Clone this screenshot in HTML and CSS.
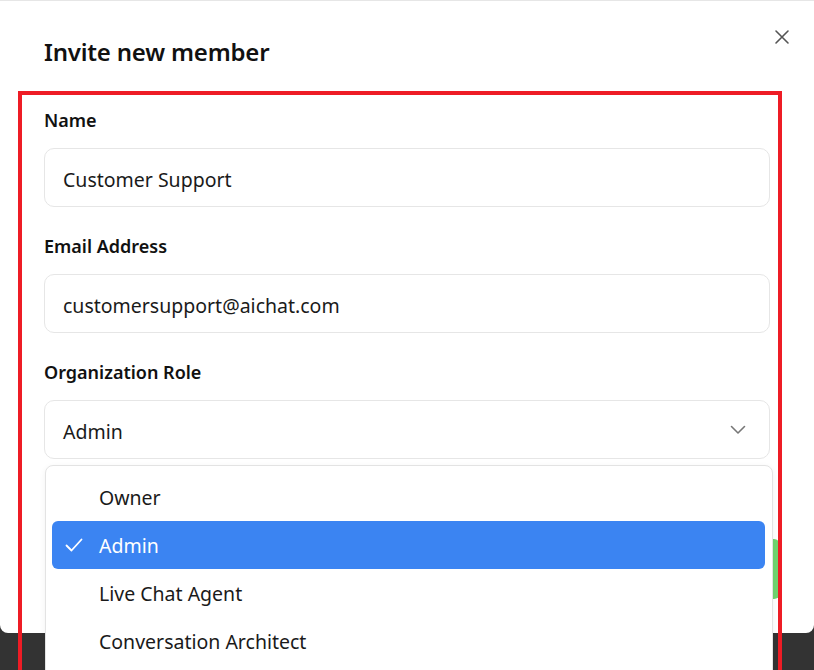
FILE: index.html
```html
<!DOCTYPE html>
<html>
<head>
<meta charset="utf-8">
<link rel="stylesheet" href="styles.css">
</head>
<body>
<div class="modal">
  <button class="close" aria-label="Close">
    <svg width="16" height="16" viewBox="0 0 16 16"><path d="M2 2L14 14M14 2L2 14" stroke="#555" stroke-width="1.6" stroke-linecap="round"/></svg>
  </button>
  <h1 class="title">Invite new member</h1>
  <div class="form">
    <div class="field">
      <label class="label">Name</label>
      <div class="input">Customer Support</div>
    </div>
    <div class="field">
      <label class="label">Email Address</label>
      <div class="input">customersupport@aichat.com</div>
    </div>
    <div class="field role">
      <label class="label">Organization Role</label>
      <div class="input select">
        <span>Admin</span>
        <svg width="16" height="10" viewBox="0 0 16 10"><path d="M1.5 1.5L8 8L14.5 1.5" fill="none" stroke="#777" stroke-width="1.6" stroke-linecap="round" stroke-linejoin="round"/></svg>
      </div>
      <div class="footer"><div class="btn-green"></div></div>
      <ul class="menu">
        <li class="item">Owner</li>
        <li class="item active">
          <svg class="check" width="18" height="14" viewBox="0 0 18 14"><path d="M1.5 7.5L6.5 12.5L16.5 1.5" fill="none" stroke="#fff" stroke-width="1.8" stroke-linecap="round" stroke-linejoin="round"/></svg>
          Admin</li>
        <li class="item">Live Chat Agent</li>
        <li class="item">Conversation Architect</li>
      </ul>
    </div>
  </div>
  <div class="highlight"></div>
</div>
</body>
</html>
```
FILE: styles.css
```css
html, body {
  margin: 0;
  padding: 0;
}
body {
  background: #333333;
  font-family: "Noto Sans", "Open Sans", sans-serif;
  color: #1a1a1a;
  width: 814px;
  height: 670px;
  overflow: hidden;
}
.modal {
  position: relative;
  box-sizing: border-box;
  height: 633px;
  background: #fff;
  border-top: 1px solid #e6e6e6;
  border-radius: 0 0 8px 8px;
  padding: 34px 44px 0 44px;
}
.close {
  position: absolute;
  top: 28px;
  right: 24px;
  border: 0;
  background: none;
  padding: 0;
  width: 16px;
  height: 16px;
}
.close svg { display: block; }
.title {
  margin: 0;
  font-size: 24px;
  line-height: 34px;
  font-weight: 600;
  letter-spacing: -0.2px;
  color: #111;
}
.form {
  margin-top: 39px;
  display: flex;
  flex-direction: column;
  gap: 27px;
}
.field {
  display: flex;
  flex-direction: column;
  gap: 16px;
}
.label {
  font-size: 18px;
  line-height: 24px;
  font-weight: 600;
  color: #111;
}
.input {
  box-sizing: border-box;
  height: 59px;
  border: 1px solid #e6e6e6;
  border-radius: 10px;
  padding: 3px 18px 0 18px;
  display: flex;
  align-items: center;
  font-size: 19.5px;
  color: #1a1a1a;
}
.select {
  justify-content: space-between;
  padding-right: 23px;
}
.select svg { margin-top: -3px; }
.role { position: relative; }
.footer {
  display: flex;
  justify-content: flex-end;
  margin-top: 64px;
  margin-right: -10px;
}
.btn-green {
  width: 140px;
  height: 60px;
  background: #6fd46f;
  border-radius: 6px;
}
.menu {
  position: absolute;
  top: 105px;
  left: 1px;
  width: 728px;
  box-sizing: border-box;
  margin: 0;
  list-style: none;
  padding: 7px 7px 20px 6px;
  background: #fff;
  border: 1px solid #e3e3e3;
  border-radius: 8px;
  box-shadow: 0 2px 6px rgba(0,0,0,0.06);
}
.item {
  position: relative;
  height: 48px;
  display: flex;
  align-items: center;
  padding-left: 47px;
  font-size: 19.5px;
  color: #1a1a1a;
  border-radius: 6px;
}
.item.active {
  background: #3b84f2;
  color: #fff;
}
.check {
  position: absolute;
  left: 13px;
  top: 17px;
}
.highlight {
  position: absolute;
  left: 18px;
  top: 90px;
  width: 764px;
  height: 620px;
  box-sizing: border-box;
  border: 4px solid #ee1c25;
  pointer-events: none;
}
```
